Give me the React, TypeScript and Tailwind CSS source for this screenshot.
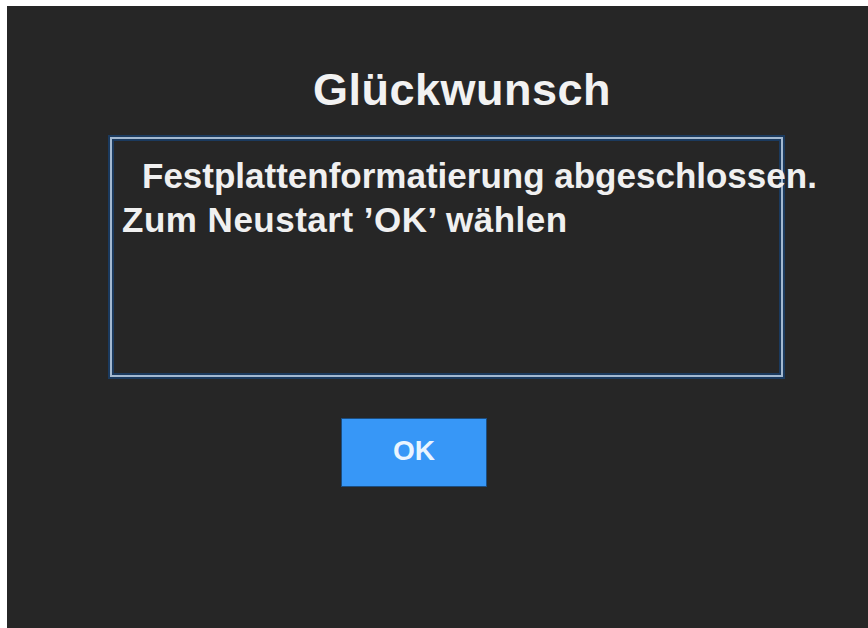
export default function App() {
  return (
    <div className="w-[868px] h-[628px] bg-white pt-[6px] pl-[7px] flex">
      {/* Dialog screen */}
      <div
        className="flex-1 bg-[#262626] flex flex-col text-white"
        style={{ fontFamily: '"Liberation Sans", Arial, sans-serif' }}
      >
        <h1 className="mt-[61px] ml-[306px] text-[45px] leading-[45px] font-bold tracking-[0.5px] text-[#f2f2f2] whitespace-nowrap">
          Glückwunsch
        </h1>

        {/* Message box */}
        <div className="mt-[25px] ml-[103px] w-[673px] h-[240px] border-2 border-[#a3b8cf] shadow-[0_0_0_2px_#1b3a5e,inset_0_0_0_2px_#1b3a5e] pt-[15px] pl-[10px]">
          <p className="text-[35px] leading-[44px] font-bold text-[#f0f0f0] whitespace-nowrap">
            <span className="block indent-[20px]">Festplattenformatierung abgeschlossen.</span>
            <span className="block tracking-[0.5px]">Zum Neustart ’OK’ wählen</span>
          </p>
        </div>

        <button className="mt-[42px] ml-[335px] w-[144px] h-[67px] bg-[#3797f7] shadow-[0_0_0_1px_#1b4d80] text-[28px] font-bold text-[#eaf5ff] flex items-center justify-center pb-[3px]">
          OK
        </button>
      </div>
    </div>
  );
}
